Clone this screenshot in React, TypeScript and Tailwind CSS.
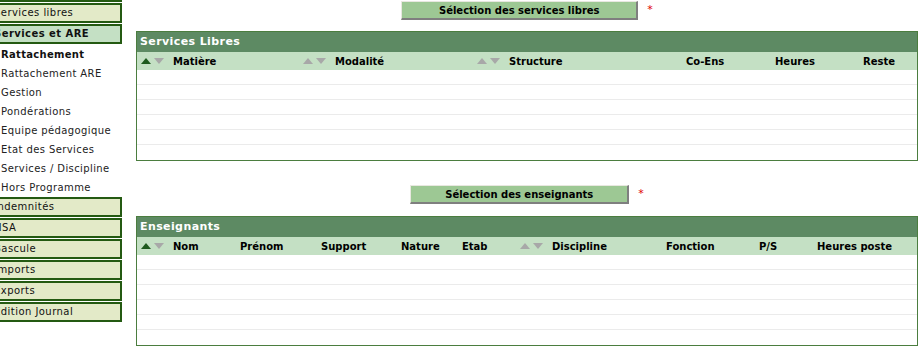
import React from "react";

const font = "[font-family:'DejaVu_Sans',Verdana,sans-serif]";

function Arrows({ active }: { active?: boolean }) {
  return (
    <span className="inline-flex items-center gap-[3px] mr-[9px]">
      <svg width="10" height="6" viewBox="0 0 10 6">
        <polygon points="0,6 5,0 10,6" fill={active ? "#1e5a1e" : "#a8a8a8"} />
      </svg>
      <svg width="10" height="6" viewBox="0 0 10 6">
        <polygon points="0,0 10,0 5,6" fill="#a8a8a8" />
      </svg>
    </span>
  );
}

type Col = { label: string; w: string; sort?: boolean; active?: boolean };

function Panel({ title, cols }: { title: string; cols: Col[] }) {
  return (
    <div className="border border-[#4b7d3f]">
      <div className="h-[20px] bg-[#5d8a63] pl-[3px] text-[11px] font-bold leading-[20px] tracking-[0.4px] text-white">
        {title}
      </div>
      <div className="flex h-[18px] items-center bg-[#c4e0c4] text-[10px] font-bold text-black">
        {cols.map((c) => (
          <div key={c.label} className={`flex items-center ${c.w}`}>
            {c.sort && <Arrows active={c.active} />}
            {c.label}
          </div>
        ))}
      </div>
      {[0, 1, 2, 3, 4, 5].map((i) => (
        <div
          key={i}
          className={`h-[15px] ${i < 5 ? "border-b border-[#ebebeb]" : ""}`}
        />
      ))}
    </div>
  );
}

function SelectButton({ label, w }: { label: string; w: string }) {
  return (
    <div className="flex items-center justify-center">
      <button
        className={`${w} h-[19px] border border-t-[#e8e8e0] border-l-[#e8e8e0] border-b-2 border-r-2 border-b-[#7f7f7f] border-r-[#7f7f7f] bg-[#9dc894] text-[10px] font-bold leading-[15px] text-black`}
      >
        {label}
      </button>
      <span className="ml-[9px] text-[11px] text-[#e00000]">*</span>
    </div>
  );
}

const sideBox =
  "h-[20px] mb-px border-2 border-[#245a12] pl-px text-[10px] leading-[16px] tracking-[0.45px] text-[#111]";

export default function App() {
  const links = [
    "Rattachement ARE",
    "Gestion",
    "Pondérations",
    "Equipe pédagogique",
    "Etat des Services",
    "Services / Discipline",
    "Hors Programme",
  ];
  const lower = ["Indemnités", "HSA", "Bascule", "Imports", "Exports", "Edition Journal"];

  return (
    <div className={`flex h-[346px] w-[919px] overflow-hidden bg-white ${font}`}>
      <div className="ml-[-9px] mt-[-18px] flex w-[131px] shrink-0 flex-col">
        <div className={`${sideBox} bg-[#e3eac8]`}>Accueil</div>
        <div className={`${sideBox} bg-[#e3eac8]`}>Services libres</div>
        <div className={`${sideBox} bg-[#c4e0c4] font-bold`}>Services et ARE</div>
        <div className="h-[19px] pl-[10px] text-[10px] font-bold leading-[19px] tracking-[0.3px] text-[#111]">
          Rattachement
        </div>
        {links.map((l) => (
          <div
            key={l}
            className="h-[19px] pl-[10px] text-[10px] leading-[19px] tracking-[0.4px] text-[#222]"
          >
            {l}
          </div>
        ))}
        {lower.map((l) => (
          <div key={l} className={`${sideBox} bg-[#e3eac8]`}>
            {l}
          </div>
        ))}
      </div>

      <div className="ml-[14px] mr-px flex flex-1 flex-col pt-[1px]">
        <SelectButton label="Sélection des services libres" w="w-[237px]" />
        <div className="mt-[11px]">
          <Panel
            title="Services Libres"
            cols={[
              { label: "Matière", w: "w-[166px] pl-[4px]", sort: true, active: true },
              { label: "Modalité", w: "w-[174px]", sort: true },
              { label: "Structure", w: "w-[209px]", sort: true },
              { label: "Co-Ens", w: "w-[89px]" },
              { label: "Heures", w: "w-[88px]" },
              { label: "Reste", w: "flex-1" },
            ]}
          />
        </div>
        <div className="mt-[24px]">
          <SelectButton label="Sélection des enseignants" w="w-[219px]" />
        </div>
        <div className="mt-[12px]">
          <Panel
            title="Enseignants"
            cols={[
              { label: "Nom", w: "w-[103px] pl-[4px]", sort: true, active: true },
              { label: "Prénom", w: "w-[81px]" },
              { label: "Support", w: "w-[80px]" },
              { label: "Nature", w: "w-[61px]" },
              { label: "Etab", w: "w-[58px]" },
              { label: "Discipline", w: "w-[146px]", sort: true },
              { label: "Fonction", w: "w-[93px]" },
              { label: "P/S", w: "w-[58px]" },
              { label: "Heures poste", w: "flex-1" },
            ]}
          />
        </div>
      </div>
    </div>
  );
}
